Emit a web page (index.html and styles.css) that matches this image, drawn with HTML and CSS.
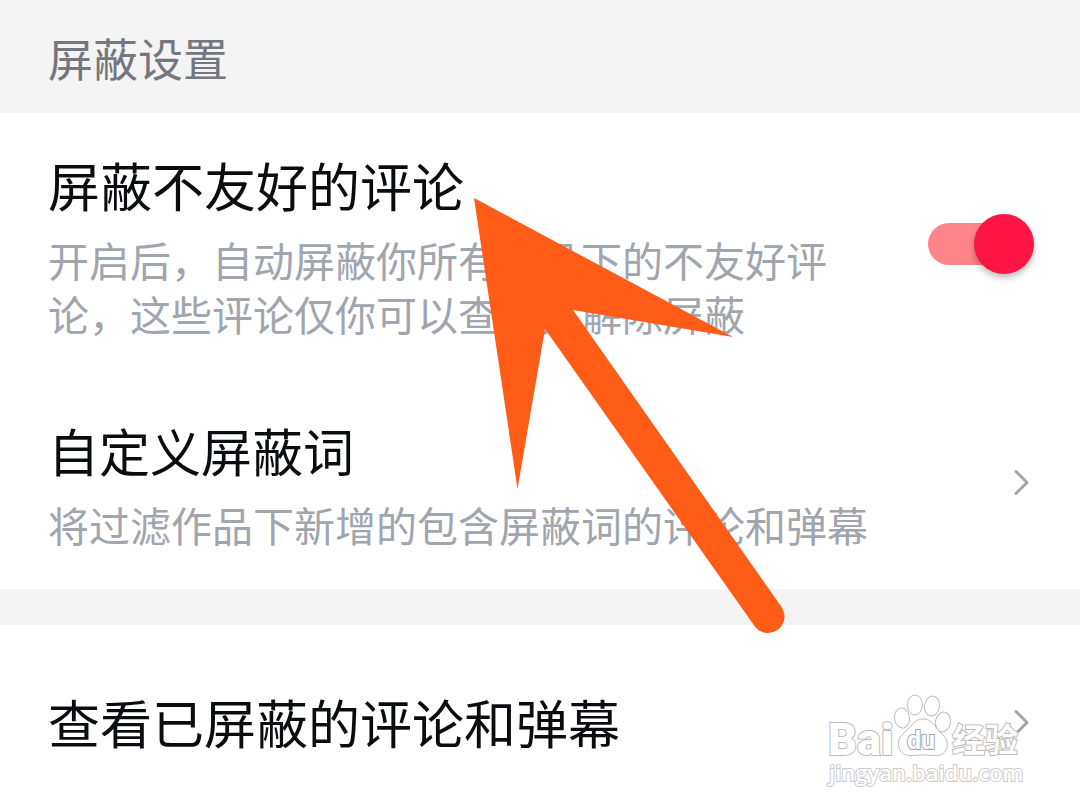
FILE: index.html
```html
<!doctype html>
<html lang="zh-CN">
  <head>
    <meta charset="UTF-8" />
    <meta name="viewport" content="width=device-width, initial-scale=1.0" />
    <title>屏蔽设置</title>
    <link rel="stylesheet" href="styles.css">
  </head>
  <body>
    <h1 class="section-title">屏蔽设置</h1>

    <!-- Block settings -->
    <div class="group">
      <div class="row">
        <div class="copy">
          <label class="title" for="block-unfriendly">屏蔽不友好的评论</label>
          <p class="desc" id="unfriendly-desc">开启后，自动屏蔽你所有作品下的不友好评论，这些评论仅你可以查看并解除屏蔽</p>
        </div>
        <input class="switch" type="checkbox" role="switch" id="block-unfriendly" aria-describedby="unfriendly-desc" checked />
      </div>

      <a class="row" href="#words">
        <span class="copy">
          <span class="title title-words">自定义屏蔽词</span>
          <span class="desc">将过滤作品下新增的包含屏蔽词的评论和弹幕</span>
        </span>
        <svg class="chevron" viewBox="0 0 20 28" aria-hidden="true"><path d="M2 3.500L13 14.500L2 25.500" /></svg>
      </a>
    </div>

    <!-- Blocked list -->
    <div class="group">
      <a class="row row-single" href="#blocked">
        <span class="title">查看已屏蔽的评论和弹幕</span>
        <svg class="chevron" viewBox="0 0 20 28" aria-hidden="true"><path d="M2 3.500L13 14.500L2 25.500" /></svg>
      </a>
    </div>

    <!-- Pointer arrow -->
    <svg class="pointer" viewBox="0 0 312 436" aria-hidden="true">
      <path d="M0 0L259 139L99 112L307.500 409A16.500 16.500 0 0 1 280.500 428L71 131L43.500 291Z" />
    </svg>

    <!-- Watermark -->
    <svg class="watermark" viewBox="0 0 200 100" role="img" aria-label="Baidu 经验">
      <text class="mark-bai" x="2" y="65">Bai</text>
      <g class="paw">
        <ellipse cx="76" cy="28" rx="7.500" ry="10" transform="rotate(-8 76 28)" />
        <ellipse cx="89" cy="15" rx="7.500" ry="10" />
        <ellipse cx="106" cy="16" rx="7.500" ry="10" transform="rotate(10 106 16)" />
        <ellipse cx="117" cy="32" rx="7.500" ry="10" transform="rotate(10 117 32)" />
        <path d="M97 29C88 29 86 36 79 42C72 48 71 54 74 60C78 68 87 65 97 65C107 65 116 68 120 60C123 54 121 48 114 42C108 36 106 29 97 29Z" />
      </g>
      <text class="mark-du" x="81" y="59">du</text>
      <text class="mark-cn" x="126" y="62">经验</text>
      <text class="mark-url" x="3" y="91">jingyan.baidu.com</text>
    </svg>
  </body>
</html>
```
FILE: styles.css
```css
* {
  margin: 0;
  padding: 0;
  box-sizing: border-box;
}

body {
  position: relative;
  font-family: "Noto Sans CJK SC", sans-serif;
  background: #fff;
  color: #0b0c0f;
  overflow-x: hidden;
}

.section-title {
  padding: 29px 48px 27px;
  background: #f4f4f4;
  color: #74777d;
  font-size: 45px;
  font-weight: 400;
  line-height: 57px;
}

.group + .group {
  border-top: 36px solid #f4f4f4;
}

.row {
  display: flex;
  align-items: center;
  justify-content: space-between;
  gap: 50px;
  padding: 34px 46px 38px 48px;
  color: inherit;
  text-decoration: none;
}

.row-single {
  padding-top: 59px;
  padding-bottom: 50px;
}

.copy {
  display: flex;
  flex-direction: column;
  gap: 9px;
}

.title {
  font-size: 52px;
  line-height: 76px;
}

.title-words {
  font-size: 51px;
}

.desc {
  color: #a1a5ae;
  font-size: 41px;
  line-height: 54px;
}

.switch {
  appearance: none;
  position: relative;
  flex: none;
  width: 106px;
  height: 42px;
  border-radius: 21px;
  background: #ff8588;
  cursor: pointer;
}

.switch::before {
  content: "";
  position: absolute;
  top: -9px;
  right: 0;
  width: 60px;
  height: 60px;
  border-radius: 50%;
  background: #ff1544;
  box-shadow: 0 4px 6px rgba(0, 0, 0, 0.25);
}

.switch:not(:checked)::before {
  right: 46px;
}

.chevron {
  flex: none;
  width: 20px;
  height: 28px;
  fill: none;
  stroke: #a1a5ae;
  stroke-width: 3;
  stroke-linecap: round;
  stroke-linejoin: round;
}

.pointer {
  position: absolute;
  top: 198px;
  left: 474px;
  width: 312px;
  height: 436px;
  fill: #ff5c17;
  pointer-events: none;
}

.watermark {
  position: absolute;
  top: 690px;
  right: 54px;
  width: 200px;
  height: 100px;
  fill: #fff;
  stroke: #bcbcbc;
  stroke-width: 1;
  pointer-events: none;
}

.watermark text {
  paint-order: stroke;
  stroke-width: 2;
}

.mark-bai {
  font: 900 45px Roboto, sans-serif;
}

.watermark .mark-du {
  font: 700 25px Roboto, sans-serif;
  stroke: #a8a8a8;
}

.mark-cn {
  font: 700 33px "Noto Sans CJK SC", sans-serif;
}

.watermark .mark-url {
  font: 600 22px "Open Sans", sans-serif;
  stroke: #ccc;
}
```
